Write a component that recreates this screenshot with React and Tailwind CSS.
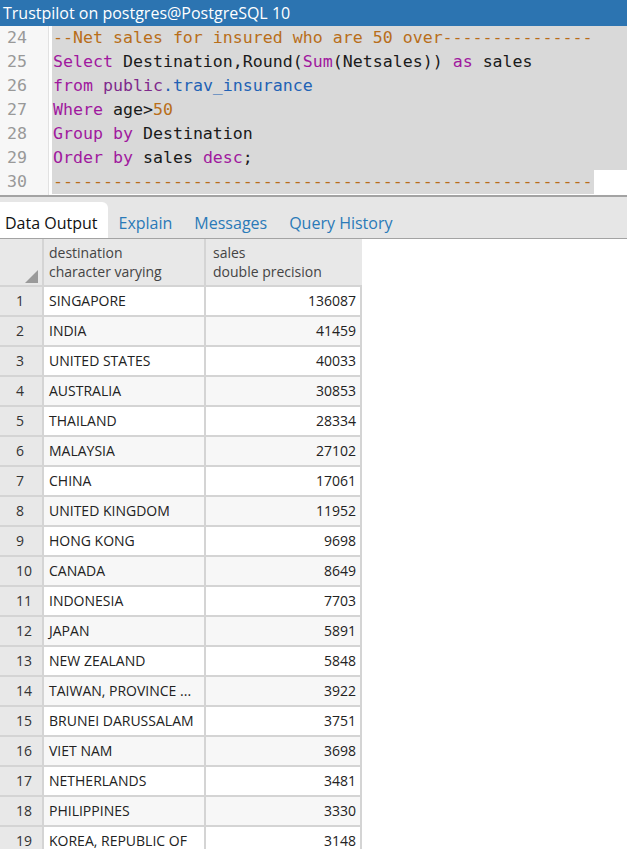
const rows = [
  ['SINGAPORE', 136087],
  ['INDIA', 41459],
  ['UNITED STATES', 40033],
  ['AUSTRALIA', 30853],
  ['THAILAND', 28334],
  ['MALAYSIA', 27102],
  ['CHINA', 17061],
  ['UNITED KINGDOM', 11952],
  ['HONG KONG', 9698],
  ['CANADA', 8649],
  ['INDONESIA', 7703],
  ['JAPAN', 5891],
  ['NEW ZEALAND', 5848],
  ['TAIWAN, PROVINCE ...', 3922],
  ['BRUNEI DARUSSALAM', 3751],
  ['VIET NAM', 3698],
  ['NETHERLANDS', 3481],
  ['PHILIPPINES', 3330],
  ['KOREA, REPUBLIC OF', 3148],
]

const kw = 'text-[#a0189e]'
const cm = 'text-[#b86e1a]'

function CodeLine({ children, partial }) {
  if (partial) {
    return (
      <div className="h-[24px] leading-[24px]">
        <span className="inline-block bg-[#d9d9d9] pl-px pr-[2px]">{children}</span>
      </div>
    )
  }
  return <div className="h-[24px] leading-[24px] bg-[#d9d9d9] pl-px">{children}</div>
}

export default function App() {
  const mono = { fontFamily: '"DejaVu Sans Mono", monospace' }
  return (
    <div className="w-[627px] h-[849px] overflow-hidden bg-white" style={{ fontFamily: '"Open Sans", sans-serif' }}>
      <div className="h-[26px] bg-[#2c74b1] text-white text-[16px] leading-[26px] pl-[3px]">
        Trustpilot on postgres@PostgreSQL 10
      </div>

      <div className="flex h-[169px] text-[16.6px]" style={mono}>
        <div className="w-[49px] bg-[#f7f7f7] border-r border-[#e2e2e2] text-[#999] pl-[7px]">
          {[24, 25, 26, 27, 28, 29, 30].map((n) => (
            <div key={n} className="h-[24px] leading-[24px]">{n}</div>
          ))}
        </div>
        <div className="flex-1 pl-[3px] whitespace-pre text-[#1a1a1a]">
          <CodeLine>
            <span className={cm}>--Net sales for insured who are 50 over---------------</span>
          </CodeLine>
          <CodeLine>
            <span className={kw}>Select</span> Destination,Round(<span className={kw}>Sum</span>(Netsales)) <span className={kw}>as</span> sales
          </CodeLine>
          <CodeLine>
            <span className={kw}>from</span> <span className="text-[#7f2a8c]">public</span><span className="text-[#2262b5]">.trav_insurance</span>
          </CodeLine>
          <CodeLine>
            <span className={kw}>Where</span> age&gt;<span className={cm}>50</span>
          </CodeLine>
          <CodeLine>
            <span className={kw}>Group</span> <span className={kw}>by</span> Destination
          </CodeLine>
          <CodeLine>
            <span className={kw}>Order</span> <span className={kw}>by</span> sales <span className={kw}>desc</span>;
          </CodeLine>
          <CodeLine partial>
            <span className={cm}>{'-'.repeat(54)}</span>
          </CodeLine>
        </div>
      </div>

      <div className="h-[44px] bg-[#e6e6e6] border-t-2 border-b border-[#a3a3a3] flex items-end">
        <div className="h-[36px] bg-white rounded-tr-[6px] pl-[5px] pr-[10px] pt-[6px] flex items-center text-[16px] text-[#111]">
          Data Output
        </div>
        {['Explain', 'Messages', 'Query History'].map((t) => (
          <div key={t} className="h-[36px] px-[11px] pt-[6px] flex items-center text-[16px] text-[#2a7ab8]">
            {t}
          </div>
        ))}
      </div>

      <div className="w-[362px] text-[14px]">
        <div className="flex h-[48px] bg-[#e8e8e8] text-[#444] border-b-2 border-[#d4d4d4] leading-[19px]">
          <div className="w-[44px] relative border-r-2 border-[#d4d4d4]">
            <svg className="absolute right-[4px] bottom-[2px]" width="13" height="13" viewBox="0 0 13 13">
              <polygon points="13,0 13,13 0,13" fill="#9a9a9a" />
            </svg>
          </div>
          <div className="w-[162px] border-r-2 border-[#d4d4d4] pl-[5px] pt-[4px]">
            <div>destination</div>
            <div>character varying</div>
          </div>
          <div className="flex-1 pl-[7px] pt-[4px]">
            <div>sales</div>
            <div>double precision</div>
          </div>
        </div>
        {rows.map(([name, sales], i) => (
          <div
            key={i}
            className={`flex h-[30px] border-b-2 border-[#d4d4d4] text-[#222] leading-[28px] ${i % 2 === 1 ? 'bg-[#f7f7f7]' : 'bg-white'}`}
          >
            <div className="w-[44px] bg-[#e8e8e8] border-r-2 border-[#d4d4d4] pl-[16px] text-[#333]">{i + 1}</div>
            <div className="w-[162px] border-r-2 border-[#d4d4d4] pl-[5px] whitespace-nowrap overflow-hidden">{name}</div>
            <div className="flex-1 border-r-2 border-[#d4d4d4] text-right pr-[4px]">{sales}</div>
          </div>
        ))}
      </div>
    </div>
  )
}
